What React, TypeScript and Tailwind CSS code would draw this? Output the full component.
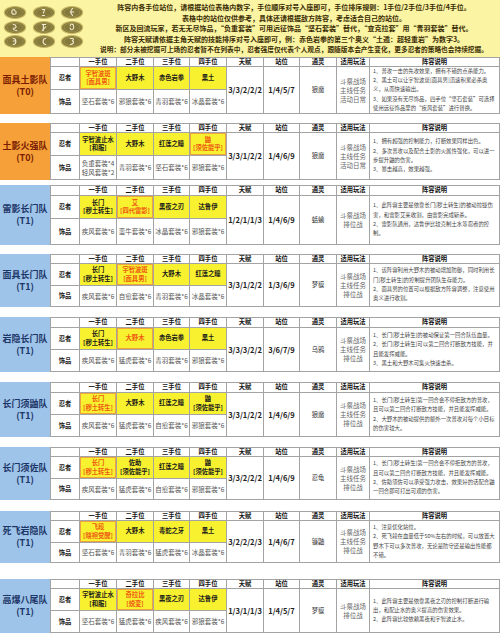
import React from "react";

type Ninja = { name: string; sub?: string; hot?: boolean };
type Team = {
  name: string;
  tier: string;
  t0?: boolean;
  rows: string;
  mt: string;
  ninjas: Ninja[];
  items: string[];
  talent: string;
  pos: string;
  summon: string;
  modes: string[];
  notes: string[];
};

const teams: Team[] = [
  {
    name: "面具土影队",
    tier: "(T0)",
    t0: true,
    rows: "grid-rows-[8px_22px_23px]",
    mt: "mt-0",
    ninjas: [{ name: "宇智波斑", sub: "[面具男]", hot: true }, { name: "大野木" }, { name: "赤色岩拳" }, { name: "黑土" }],
    items: ["坚石套装*6", "邪狼套装*6", "青羽套装*6", "冰晶套装*6"],
    talent: "3/3/2/2/2",
    pos: "1/4/5/7",
    summon: "狼魔",
    modes: ["斗祭战场", "主线任务", "活动日常"],
    notes: [
      "1、普攻一击的先攻效果，拥有不错的点杀能力。",
      "2、黑土可以让宇智波斑[面具男]迅速积累必杀奥义，从而快速输出。",
      "3、如果没有无尽饰品，四手位“坚石套装”可选择使用远征饰品里的“疾风套装”进行替换。",
    ],
  },
  {
    name: "土影火强队",
    tier: "(T0)",
    t0: true,
    rows: "grid-rows-[8px_22px_23px]",
    mt: "mt-[9px]",
    ninjas: [{ name: "宇智波止水", sub: "[和服]" }, { name: "大野木" }, { name: "红莲之瞳" }, { name: "鼬", sub: "[须佐能乎]", hot: true }],
    items: ["负重套装*4\n轻风套装*2", "青羽套装*6", "坚石套装*6", "邪狼套装*6"],
    talent: "3/3/1/2/2",
    pos: "1/4/6/9",
    summon: "狼魔",
    modes: ["斗祭战场", "主线任务", "活动日常"],
    notes: [
      "1、拥有超强的控制能力，打断效果同样出色。",
      "2、多次普攻以及配合土影的火属性强化，可以进一步提升鼬的伤害。",
      "3、暴击越高，效果越强。",
    ],
  },
  {
    name: "雷影长门队",
    tier: "(T1)",
    rows: "grid-rows-[9px_22px_25px]",
    mt: "mt-[5px]",
    ninjas: [{ name: "长门", sub: "[秽土转生]" }, { name: "艾", sub: "[四代雷影]", hot: true }, { name: "黑夜之刃" }, { name: "达鲁伊" }],
    items: ["疾风套装*6", "蛮牛套装*6", "冰晶套装*6", "邪狼套装*6"],
    talent: "1/2/1/1/3",
    pos: "1/4/6/9",
    summon: "蛞蝓",
    modes: ["斗祭战场", "排位战"],
    notes: [
      "1、此阵容主要是依靠长门[秽土转生]的被动拉拢伤害，和雷影艾来收割，由雷影完成斩杀。",
      "2、雷影队通用，达鲁伊比较克制土水等忍者的控制。",
    ],
  },
  {
    name: "面具长门队",
    tier: "(T1)",
    rows: "grid-rows-[8px_21px_20px]",
    mt: "mt-[9px]",
    ninjas: [{ name: "长门", sub: "[秽土转生]" }, { name: "宇智波斑", sub: "[面具男]", hot: true }, { name: "大野木" }, { name: "红莲之瞳" }],
    items: ["疾风套装*6", "自愈套装*6", "青羽套装*6", "冰晶套装*6"],
    talent: "3/3/1/2/2",
    pos: "1/3/6/9",
    summon: "梦貘",
    modes: ["斗祭战场", "主线任务", "排位战"],
    notes: [
      "1、该阵容利用大野木的被动增加防御，同时利用长门[秽土转生]的控制提升团队生存能力。",
      "2、面具男的位置可以根据敌方阵容调整，注意使用奥义进行收割。",
    ],
  },
  {
    name: "岩隐长门队",
    tier: "(T1)",
    rows: "grid-rows-[9px_21px_21px]",
    mt: "mt-[10px]",
    ninjas: [{ name: "长门", sub: "[秽土转生]" }, { name: "大野木", hot: true }, { name: "赤色岩拳" }, { name: "黑土" }],
    items: ["疾风套装*6", "猛虎套装*6", "青羽套装*6", "邪狼套装*6"],
    talent: "3/3/3/2/2",
    pos: "3/6/7/9",
    summon: "乌鸦",
    modes: ["斗祭战场", "主线任务", "排位战"],
    notes: [
      "1、长门[秽土转生]的被动保证第一回合队伍血量。",
      "2、长门[秽土转生]可以第二回合打断敌方技能，并且能发挥威能。",
      "3、黑土和大野木可集火快速击杀。",
    ],
  },
  {
    name: "长门须鼬队",
    tier: "(T1)",
    rows: "grid-rows-[9px_21px_21px]",
    mt: "mt-[10px]",
    ninjas: [{ name: "长门", sub: "[秽土转生]", hot: true }, { name: "大野木" }, { name: "红莲之瞳" }, { name: "鼬", sub: "[须佐能乎]" }],
    items: ["疾风套装*6", "猛虎套装*6", "自愈套装*6", "邪狼套装*6"],
    talent: "3/3/1/2/2",
    pos: "1/4/6/9",
    summon: "狼魔",
    modes: ["斗祭战场", "主线任务", "排位战"],
    notes: [
      "1、长门[秽土转生]第一回合会不停拒敌方的普攻，且可以第二回合打断敌方技能，并且能发挥威能。",
      "2、大野木的被动提供的额外一次普攻对每个小目标的伤害较大。",
    ],
  },
  {
    name: "长门须佐队",
    tier: "(T1)",
    rows: "grid-rows-[8px_21px_20px]",
    mt: "mt-[10px]",
    ninjas: [{ name: "长门", sub: "[秽土转生]", hot: true }, { name: "佐助", sub: "[须佐能乎]" }, { name: "红莲之瞳" }, { name: "鼬", sub: "[须佐能乎]" }],
    items: ["疾风套装*6", "猛虎套装*6", "自愈套装*6", "邪狼套装*6"],
    talent: "3/3/2/2/2",
    pos: "1/4/6/9",
    summon: "忍龟",
    modes: ["斗祭战场", "主线任务", "排位战"],
    notes: [
      "1、长门[秽土转生]第一回合会不停拒敌方的普攻，且可以第二回合打断敌方技能，并且能发挥威能。",
      "2、佐助须佐可以承受强力攻击，效果好的话配合鼬一回合即可打出可观的伤害。",
    ],
  },
  {
    name: "死飞岩隐队",
    tier: "(T1)",
    rows: "grid-rows-[8px_21px_19px]",
    mt: "mt-[11px]",
    ninjas: [{ name: "飞段", sub: "[晓袍觉醒]", hot: true }, { name: "大野木" }, { name: "毒蛇之牙" }, { name: "黑土" }],
    items: ["坚石套装*6", "青羽套装*6", "猛虎套装*6", "冰晶套装*6"],
    talent: "3/2/2/2/3",
    pos: "1/4/6/7",
    summon: "镰鼬",
    modes: ["斗祭战场", "主线任务", "排位战"],
    notes: [
      "1、注意优化站位。",
      "2、死飞段在血量低于50%左右的时候，可以放置大野木下可以多次普攻，无论是防守还是输出性能都不错。",
    ],
  },
  {
    name: "高爆八尾队",
    tier: "(T1)",
    rows: "grid-rows-[8px_21px_21px]",
    mt: "mt-[16px]",
    ninjas: [{ name: "宇智波止水", sub: "[和服]" }, { name: "奇拉比", sub: "[蜕变]", hot: true }, { name: "黑夜之刃" }, { name: "达鲁伊" }],
    items: ["坚石套装*6", "猛虎套装*6", "疾风套装*6", "邪狼套装*6"],
    talent: "1/3/1/1/3",
    pos: "1/4/5/7",
    summon: "梦貘",
    modes: ["斗祭战场", "排位战"],
    notes: [
      "1、此阵容主要是依靠黑夜之刃的控制打断进行输出，和配止水的奥义提高的伤害效果。",
      "2、此阵容比较依赖黑夜和宇智波止水。",
    ],
  },
];

const headers = ["一手位", "二手位", "三手位", "四手位", "天赋", "站位", "通灵", "适用玩法", "阵容说明"];

// little village-style marks inside the olive badges
const marks = [
  "M9 3 C6 3 6 7 9 7 C11 7 11 4 9 4",
  "M8 3 L10 3 L9 6 M8 8 L10 8",
  "M10 2 C8 4 8 6 10 8 M8 5 L11 5",
  "M8 3 C11 3 11 6 9 6 C7 6 8 8 11 8",
  "M8 3 L11 3 M9 3 L9 8 M11 5 L8 8",
  "M8 4 C8 2 11 2 11 5 C11 8 8 8 8 6",
  "M8 3 C11 3 11 8 8 8 M8 5 L10 5",
  "M11 3 C8 3 8 8 11 8",
  "M8 3 L10 3 C12 4 9 5 10 5 C12 6 10 8 8 8",
];

const Badge = ({ d }: { d: string }) => (
  <svg width="24" height="13" viewBox="0 0 19 11">
    <ellipse cx="9.5" cy="5.5" rx="9" ry="5" fill="#857a3c" stroke="#c8b764" strokeWidth="0.9" />
    <ellipse cx="9.5" cy="5.5" rx="6.8" ry="3.7" fill="none" stroke="#a79a52" strokeWidth="0.5" />
    <path d={d} fill="none" stroke="#f3ead0" strokeWidth="0.9" strokeLinecap="round" />
  </svg>
);

const TeamBlock = ({ t }: { t: Team }) => (
  <div className={`flex ${t.mt}`}>
    <div
      className={`w-[50px] shrink-0 flex flex-col items-center justify-center font-bold text-[9px] leading-[12px] ${
        t.t0 ? "bg-[#f5a038] text-[#7a1c02]" : "bg-[#9ec4e9] text-[#1d3668]"
      }`}
    >
      <span>{t.name}</span>
      <span>{t.tier}</span>
    </div>
    <div
      className={`flex-1 grid grid-cols-[28px_36px_36px_35px_36px_36px_35px_36px_32px_1fr] ${t.rows} gap-px bg-[#a3a3a3] border border-[#a3a3a3]`}
    >
      <div className="bg-white" />
      {headers.map((h) => (
        <div key={h} className="bg-white flex items-center justify-center font-bold text-[6.3px] leading-none text-[#111]">
          {h}
        </div>
      ))}

      <div className="bg-white flex items-center justify-center font-bold text-[6.3px] text-[#222]">忍者</div>
      {t.ninjas.map((n, i) => (
        <div
          key={i}
          className={`bg-[#f8f130] flex flex-col items-center justify-center font-bold text-[6.3px] leading-[8.5px] whitespace-nowrap ${
            n.hot ? "text-[#ee5a12] shadow-[inset_0_0_0_1px_#f0a23c]" : "text-[#1a1a1a]"
          }`}
        >
          <span>{n.name}</span>
          {n.sub && <span>{n.sub}</span>}
        </div>
      ))}
      <div className="row-span-2 bg-white flex items-center justify-center font-bold text-[7.5px] text-[#222]">{t.talent}</div>
      <div className="row-span-2 bg-white flex items-center justify-center font-bold text-[7.5px] text-[#222]">{t.pos}</div>
      <div className="row-span-2 bg-white flex items-center justify-center text-[6.3px] text-[#333]">{t.summon}</div>
      <div className="row-span-2 bg-white flex flex-col items-center justify-center text-[6.5px] leading-[9px] text-[#666]">
        {t.modes.map((m) => (
          <span key={m}>{m}</span>
        ))}
      </div>
      <div className="row-span-2 bg-white flex flex-col justify-center px-[3px] text-[5.4px] leading-[9.3px] text-[#444] overflow-hidden">
        {t.notes.map((n, i) => (
          <p key={i}>{n}</p>
        ))}
      </div>

      <div className="bg-white flex items-center justify-center font-bold text-[6.3px] text-[#222]">饰品</div>
      {t.items.map((it, i) => (
        <div
          key={i}
          className="bg-white flex items-center justify-center text-center text-[6.5px] leading-[9px] text-[#555] whitespace-pre-line"
        >
          {it}
        </div>
      ))}
    </div>
  </div>
);

const App = () => {
  return (
    <div className="w-[500px] h-[633px] overflow-hidden bg-white font-['Noto_Sans_CJK_SC',sans-serif]">
      {/* notice banner */}
      <div className="h-[57px] bg-[#fbf4a3] flex">
        <div className="w-[88px] shrink-0 grid grid-cols-[24px_24px_24px] auto-rows-[13px] gap-x-[4.5px] gap-y-[1.5px] pl-[3px] pt-[6px]">
          {marks.map((d, i) => (
            <Badge key={i} d={d} />
          ))}
        </div>
        <div className="flex-1 text-center pt-[2px] font-bold text-[7px] leading-[10.5px] text-[#3a2d05] whitespace-nowrap">
          <p>阵容内各手位站位，请根据站位表格内数字，手位顺序对号入座即可，手位排序规则：1手位/2手位/3手位/4手位。</p>
          <p>表格中的站位仅供参考，具体还请根据敌方阵容，考虑适合自己的站位。</p>
          <p>新区及回流玩家，若无无尽饰品，“负重套装”可用远征饰品“坚石套装”替代，“查克拉套”用“青羽套装”替代。</p>
          <p>阵容天赋请依据主角天赋的技能排序对号入座即可，例：赤色岩拳的第三个奥义“土遁：超轻重岩”为数字3。</p>
          <p className="text-[6.7px]">说明：部分未被挖掘可上场的忍者暂不在列表中，忍者强度仅代表个人观点，跟随版本会产生变化，更多忍者的策略也会持续挖掘。</p>
        </div>
      </div>

      {teams.map((t) => (
        <TeamBlock key={t.name} t={t} />
      ))}
    </div>
  );
};

export default App;
